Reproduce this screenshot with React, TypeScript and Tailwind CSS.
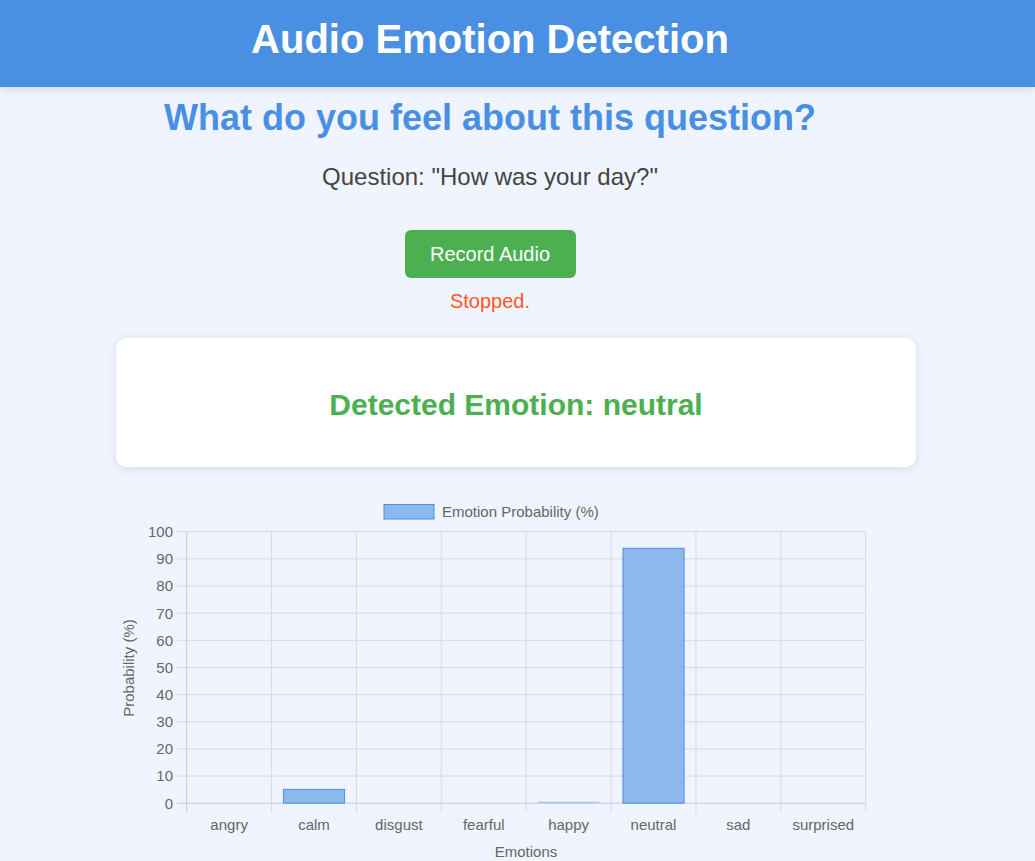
import React from "react";

const labels = ["angry", "calm", "disgust", "fearful", "happy", "neutral", "sad", "surprised"];
const values = [0, 5.1, 0, 0, 0.2, 93.9, 0, 0];

function Chart() {
  const left = 186.7;
  const right = 865.7;
  const top = 531.7;
  const bottom = 803.2;
  const catW = (right - left) / 8;
  const unit = (bottom - top) / 100;
  const grid = "#d6d9e3";
  const ticks = [100, 90, 80, 70, 60, 50, 40, 30, 20, 10, 0];
  return (
    <svg
      width={800}
      height={371}
      viewBox="116 490 800 371"
      className="block"
      style={{ fontFamily: '"Liberation Sans", Arial, sans-serif' }}
    >
      {/* legend */}
      <rect x={384} y={504.5} width={50} height={14.5} fill="#8db8ee" stroke="#4a90e2" strokeWidth={1} />
      <text x={442} y={516.5} fontSize={15} fill="#666">
        Emotion Probability (%)
      </text>
      {/* horizontal grid */}
      {ticks.map((t) => {
        const y = bottom - t * unit;
        return (
          <g key={t}>
            <line x1={177} x2={right} y1={y} y2={y} stroke={t === 0 ? "#c6c9d4" : grid} strokeWidth={1} />
            <text x={173} y={y + 5.4} fontSize={15} fill="#666" textAnchor="end">
              {t}
            </text>
          </g>
        );
      })}
      {/* vertical grid */}
      {Array.from({ length: 9 }).map((_, i) => {
        const x = left + i * catW;
        return <line key={i} x1={x} x2={x} y1={top} y2={812.7} stroke={i === 0 ? "#c6c9d4" : grid} strokeWidth={1} />;
      })}
      {/* bars */}
      {values.map((v, i) => {
        if (v <= 0) return null;
        const bw = catW * 0.72;
        const x = left + i * catW + (catW - bw) / 2;
        const h = v * unit;
        if (v < 1) {
          return <rect key={i} x={x} y={bottom - 1.5} width={bw} height={1.5} fill="#a9c6ee" />;
        }
        return (
          <rect
            key={i}
            x={x}
            y={bottom - h}
            width={bw}
            height={h}
            fill="#8db8ee"
            stroke="#4a90e2"
            strokeWidth={1}
          />
        );
      })}
      {/* x labels */}
      {labels.map((l, i) => (
        <text key={l} x={left + (i + 0.5) * catW} y={830} fontSize={15} fill="#666" textAnchor="middle">
          {l}
        </text>
      ))}
      <text x={526} y={857} fontSize={15} fill="#666" textAnchor="middle">
        Emotions
      </text>
      <text
        x={134}
        y={668}
        fontSize={15}
        fill="#666"
        textAnchor="middle"
        transform="rotate(-90 134 668)"
      >
        Probability (%)
      </text>
    </svg>
  );
}

export default function App() {
  return (
    <div
      className="min-h-[861px] w-[1035px] bg-[#f0f4ff] overflow-hidden"
      style={{ fontFamily: '"Liberation Sans", Arial, sans-serif' }}
    >
      <header className="h-[87px] bg-[#4a90e2] pt-[16px] pr-[55px] shadow-[0_2px_8px_rgba(0,0,0,0.12)] relative">
        <h1 className="text-center text-[40px] leading-[46px] font-bold text-white">Audio Emotion Detection</h1>
      </header>
      <div className="flex flex-col items-center pr-[55px]">
        <h2 className="mt-[10px] text-[36px] leading-[41px] font-bold text-[#4a90e2]">
          What do you feel about this question?
        </h2>
        <p className="mt-[25px] text-[24px] leading-[28px] text-[#444]">Question: "How was your day?"</p>
        <button className="mt-[39px] h-[48px] w-[171px] rounded-[6px] bg-[#4caf50] text-[20px] leading-[23px] text-white">
          Record Audio
        </button>
        <p className="mt-[12px] text-[20px] leading-[23px] text-[#ff5722]">Stopped.</p>
      </div>
      <div className="ml-[116px] mt-[25px] w-[800px] h-[129px] rounded-[10px] bg-white pt-[49px] shadow-[0_2px_10px_rgba(0,0,0,0.1)]">
        <h3 className="text-center text-[30px] leading-[35px] font-bold text-[#4caf50]">
          Detected Emotion: neutral
        </h3>
      </div>
      <div className="ml-[116px] mt-[23px]">
        <Chart />
      </div>
    </div>
  );
}
